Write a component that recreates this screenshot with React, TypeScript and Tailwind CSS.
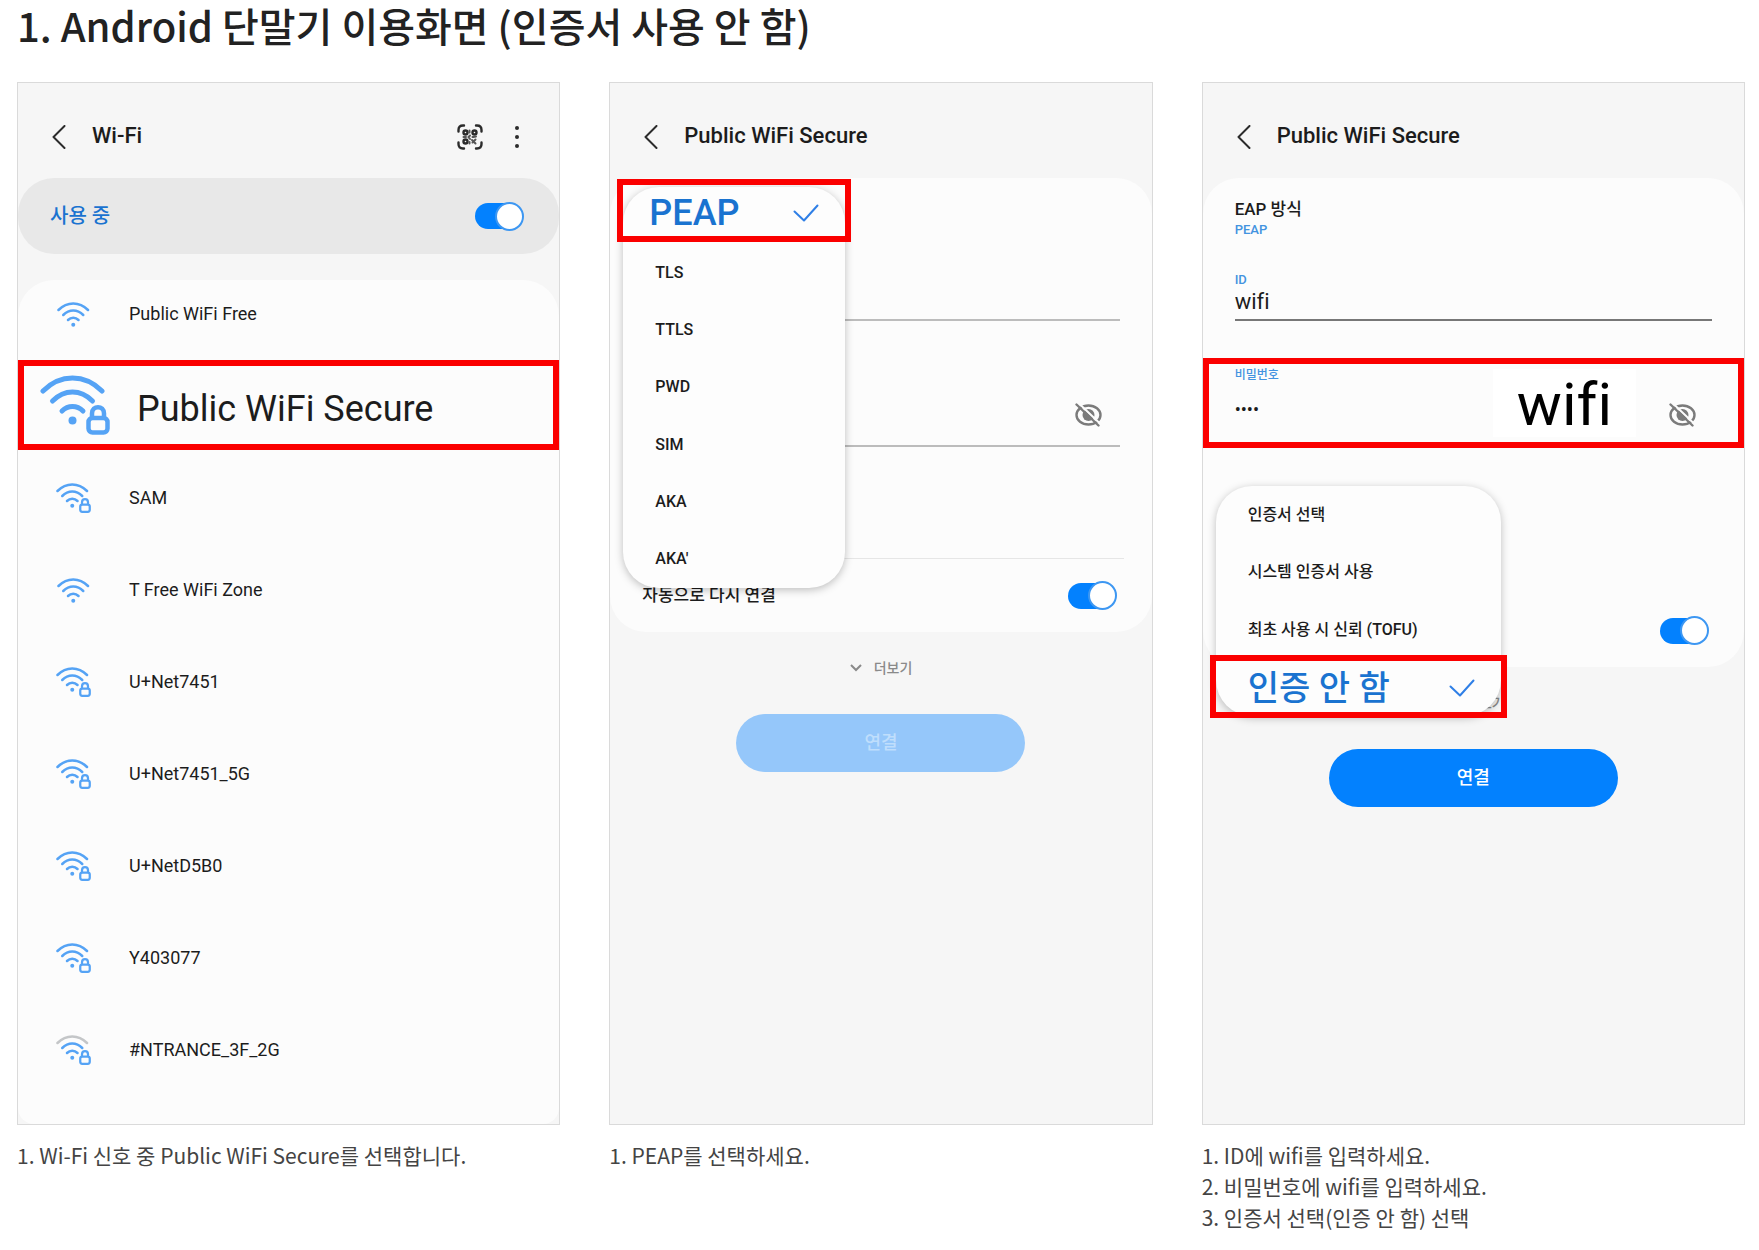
import React from "react";
import clsx from "clsx";

type Network = {
  name: string;
  locked?: boolean;
  weak?: boolean;
  highlighted?: boolean;
};

const networks: Network[] = [
  { name: "Public WiFi Free" },
  { name: "Public WiFi Secure", locked: true, highlighted: true },
  { name: "SAM", locked: true },
  { name: "T Free WiFi Zone" },
  { name: "U+Net7451", locked: true },
  { name: "U+Net7451_5G", locked: true },
  { name: "U+NetD5B0", locked: true },
  { name: "Y403077", locked: true },
  { name: "#NTRANCE_3F_2G", locked: true, weak: true },
];

const eapMethods = ["TLS", "TTLS", "PWD", "SIM", "AKA", "AKA'"];

const certificates = [
  "인증서 선택",
  "시스템 인증서 사용",
  "최초 사용 시 신뢰 (TOFU)",
];

const WifiIcon = ({
  locked,
  weak,
  className,
}: {
  locked?: boolean;
  weak?: boolean;
  className?: string;
}) => (
  <svg
    viewBox={locked ? "0 0 70 60" : "0 0 66 50"}
    className={className}
    fill="none"
    stroke="#55a3f5"
    strokeWidth="5"
    strokeLinecap="round"
    aria-hidden="true"
  >
    <path
      d="M3 16C11 8 20 3 32.5 3S54 8 62 16"
      stroke={weak ? "#c4c6c8" : undefined}
    />
    <path d="M12.5 26C18 20.5 24 17 32.5 17S47 20.5 52.5 26" />
    <path d="M22 36C25 33 28 31.500 32.500 31.500S40 33 43 36" />
    <circle cx="32.500" cy="45.500" r="4" fill="#55a3f5" stroke="none" />
    {locked && (
      <>
        <rect x="48.500" y="43" width="19" height="14.500" rx="4" strokeWidth="4.500" />
        <path d="M52 42V38.500C52 30 64 30 64 38.500V42" strokeWidth="4.500" />
      </>
    )}
  </svg>
);

const BackIcon = () => (
  <svg
    viewBox="0 0 14 24"
    className="h-6 w-3.5"
    fill="none"
    stroke="#2b2b2b"
    strokeWidth="2"
    strokeLinecap="round"
    strokeLinejoin="round"
    aria-hidden="true"
  >
    <path d="M12.500 1 1.500 12 12.500 23" />
  </svg>
);

const QrIcon = () => (
  <svg
    viewBox="0 0 26 26"
    className="size-6.5"
    fill="none"
    stroke="#2b2b2b"
    strokeWidth="2.400"
    strokeLinecap="round"
    aria-hidden="true"
  >
    <path d="M1.500 7.500V6C1.500 3 3 1.500 6 1.500h1M19 1.500h1c3 0 4.500 1.500 4.500 4.500v1.500M24.500 18.500V20c0 3-1.500 4.500-4.500 4.500h-1M7 24.500H6c-3 0-4.500-1.500-4.500-4.500v-1.500" />
    <circle cx="8.500" cy="8.500" r="2" />
    <circle cx="17.500" cy="8.500" r="2" />
    <circle cx="8.500" cy="17.500" r="2" />
    <path
      d="M12.500 6.500v2M13 11.500l-1.500 1.500 1.500 2M6.500 13h2.500M15.500 13h1l2.500-.5M12.500 18v1.500M15 16l3.500 3.500M18.500 15.500l-3 3"
      strokeWidth="2"
      stroke="#555"
    />
  </svg>
);

const MoreIcon = () => (
  <svg viewBox="0 0 4 24" className="h-6 w-1" fill="#2b2b2b" aria-hidden="true">
    <circle cx="2" cy="3" r="2" />
    <circle cx="2" cy="12" r="2" />
    <circle cx="2" cy="21" r="2" />
  </svg>
);

const EyeOffIcon = () => (
  <svg
    viewBox="0 0 28 24"
    className="h-6 w-7"
    fill="none"
    stroke="#7b7b7b"
    strokeWidth="2.400"
    strokeLinecap="round"
    aria-hidden="true"
  >
    <ellipse cx="14.500" cy="12" rx="12" ry="9.500" />
    <circle cx="14.500" cy="12" r="6" fill="#7b7b7b" stroke="none" />
    <path d="M5 .5 27 21.500" stroke="#fcfcfc" strokeWidth="2" />
    <path d="M2.500 1.500 24.500 22.500" />
  </svg>
);

const CheckIcon = () => (
  <svg
    viewBox="0 0 26 18"
    className="h-4.5 w-6.5"
    fill="none"
    stroke="#2f7fe6"
    strokeWidth="2"
    strokeLinecap="round"
    strokeLinejoin="round"
    aria-hidden="true"
  >
    <path d="M1.500 7.500 11 16.500 24.500 1.500" />
  </svg>
);

const Toggle = ({ label }: { label: string }) => (
  <label className="relative flex h-[30px] w-[49px] shrink-0 cursor-pointer items-center">
    <input
      type="checkbox"
      defaultChecked
      aria-label={label}
      className="peer sr-only"
    />
    <span className="h-[26px] w-[46px] rounded-full bg-gray-400 peer-checked:bg-[#0381fe]" />
    <span className="absolute left-0 size-[29px] rounded-full border-2 border-gray-400 bg-white peer-checked:right-0 peer-checked:left-auto peer-checked:border-[#3d97f2]" />
  </label>
);

const Phone = ({
  title,
  actions,
  children,
}: {
  title: string;
  actions?: React.ReactNode;
  children: React.ReactNode;
}) => (
  <div className="flex min-h-[1043px] flex-col overflow-hidden border border-[#dadada] bg-[#f6f6f6] font-['Roboto','Noto_Sans_CJK_KR',sans-serif] text-lg text-[#1c1c1c] [font-variant-ligatures:none]">
    <header className="flex h-[95px] items-center pt-3 pr-10 pl-[34px]">
      <button type="button" aria-label="뒤로">
        <BackIcon />
      </button>
      <h2 className="ml-[26px] text-[22px] font-medium">{title}</h2>
      {actions && (
        <div className="ml-auto flex items-center gap-8">{actions}</div>
      )}
    </header>
    {children}
  </div>
);

const Steps = ({ items }: { items: string[] }) => (
  <ol className="mt-[15px] text-[21px] leading-[31px] text-[#444]">
    {items.map((item, i) => (
      <li key={item}>
        {i + 1}. {item}
      </li>
    ))}
  </ol>
);

const Footer = ({ disabled }: { disabled?: boolean }) => (
  <>
    <button
      type="button"
      className="flex h-[72px] items-center justify-center gap-3 text-sm font-medium text-[#8a8a8a]"
    >
      <svg
        viewBox="0 0 12 8"
        className="h-2 w-3"
        fill="none"
        stroke="#8a8a8a"
        strokeWidth="2"
        aria-hidden="true"
      >
        <path d="m1 1 5 5 5-5" />
      </svg>
      더보기
    </button>
    <button
      type="button"
      disabled={disabled}
      className="mt-[10px] h-[58px] w-[289px] self-center rounded-full bg-[#0381fe] font-medium text-white disabled:bg-[#95c7fa] disabled:text-[#bfdefc]"
    >
      연결
    </button>
  </>
);

const NetworkRow = ({ name, locked, weak, highlighted }: Network) => (
  <li className={clsx(highlighted && "-mt-3 -mb-2.5")}>
    <button
      type="button"
      className={clsx(
        "flex w-full items-center text-left",
        highlighted
          ? "h-[90px] gap-[27px] border-6 border-[#fb0000] px-4 text-4xl"
          : "h-[68px] gap-[38px] px-[38px]",
      )}
    >
      {highlighted ? (
        <WifiIcon locked className="h-[60px] w-[70px]" />
      ) : (
        <span className="flex w-[35px] justify-center">
          <WifiIcon
            locked={locked}
            weak={weak}
            className={locked ? "h-[30px] w-[35px]" : "h-[25px] w-[33px]"}
          />
        </span>
      )}
      <span className={clsx(highlighted && "pt-2")}>{name}</span>
    </button>
  </li>
);

const WifiListScreen = () => (
  <Phone
    title="Wi-Fi"
    actions={
      <>
        <button type="button" aria-label="QR 코드 스캔">
          <QrIcon />
        </button>
        <button type="button" aria-label="더보기">
          <MoreIcon />
        </button>
      </>
    }
  >
    <div className="flex h-[76px] items-center justify-between rounded-[36px] bg-[#e8e8e8] pr-[35px] pl-8">
      <span className="text-xl font-medium text-[#1a73d0]">사용 중</span>
      <Toggle label="Wi-Fi 사용" />
    </div>
    <ul className="mt-[26px] flex flex-1 flex-col gap-6 rounded-t-[36px] rounded-b-2xl bg-[#fcfcfc]">
      {networks.map((network) => (
        <NetworkRow key={network.name} {...network} />
      ))}
    </ul>
  </Phone>
);

const EapScreen = () => (
  <Phone title="Public WiFi Secure">
    <div className="relative rounded-[36px] bg-[#fcfcfc]">
      <div className="mx-8 h-[143px] border-b-2 border-[#bcbcbc]" />
      <div className="mx-8 flex h-[126px] items-end justify-end border-b-2 border-[#bcbcbc] pr-[18px] pb-[18px]">
        <button type="button" aria-label="비밀번호 표시">
          <EyeOffIcon />
        </button>
      </div>
      <div className="mx-7 h-[112px] border-b border-[#e6e6e6]" />
      <div className="flex h-[73px] items-center justify-between pr-[35px] pl-8">
        <span className="text-[17px] font-medium">자동으로 다시 연결</span>
        <Toggle label="자동으로 다시 연결" />
      </div>

      <ul
        role="listbox"
        aria-label="EAP 방식"
        className="absolute top-[9px] left-[13px] grid h-[401px] w-[222px] auto-rows-fr rounded-[36px] bg-[#fdfdfd] text-base font-medium shadow-[0_2px_8px_rgba(0,0,0,0.25)]"
      >
        <li role="option" aria-selected="true" className="relative">
          <button
            type="button"
            className="absolute -inset-x-1.5 -top-2 flex h-[63px] items-center justify-between border-6 border-[#fb0000] pt-1 pr-[26px] pl-[26px] text-4xl font-medium text-[#1a73d0]"
          >
            PEAP
            <CheckIcon />
          </button>
        </li>
        {eapMethods.map((method) => (
          <li key={method} role="option" aria-selected="false" className="flex">
            <button type="button" className="flex-1 px-8 text-left">
              {method}
            </button>
          </li>
        ))}
      </ul>
    </div>
    <Footer disabled />
  </Phone>
);

const CredentialsScreen = () => (
  <Phone title="Public WiFi Secure">
    <div className="relative z-10 rounded-[36px] bg-[#fcfcfc] pt-5">
      <div className="px-8">
        <p className="text-[17px] leading-[22px] font-medium">EAP 방식</p>
        <p className="text-[13px] leading-5 font-medium text-[#4393e0]">PEAP</p>
        <label
          htmlFor="wifi-id"
          className="mt-[30px] block text-[13px] leading-5 font-medium text-[#4393e0]"
        >
          ID
        </label>
        <input
          id="wifi-id"
          type="text"
          defaultValue="wifi"
          className="block h-[31px] w-full border-b-2 border-[#777] pb-1 text-[22px] outline-none"
        />
      </div>
      <div className="mt-[37px] flex h-[90px] items-center border-6 border-[#fb0000] pr-[42px] pl-[26px]">
        <div className="min-w-0 flex-1 self-start">
          <label
            htmlFor="wifi-password"
            className="block text-xs leading-[22px] font-medium text-[#4393e0]"
          >
            비밀번호
          </label>
          <input
            id="wifi-password"
            type="password"
            defaultValue="wifi"
            className="mt-3 block h-6 w-full text-lg outline-none"
          />
        </div>
        <span className="bg-white px-6 pt-1 text-[60px] leading-[64px] text-black">
          wifi
        </span>
        <button type="button" aria-label="비밀번호 표시" className="mt-6 ml-8">
          <EyeOffIcon />
        </button>
      </div>
      <div className="mt-[146px] flex h-[73px] items-center justify-end pr-[35px]">
        <Toggle label="자동으로 다시 연결" />
      </div>

      <ul
        role="listbox"
        aria-label="CA 인증서"
        className="absolute top-[308px] left-[13px] grid h-[230px] w-[285px] auto-rows-fr rounded-[36px] bg-[#fdfdfd] text-base font-medium shadow-[0_2px_8px_rgba(0,0,0,0.25)]"
      >
        {certificates.map((certificate) => (
          <li
            key={certificate}
            role="option"
            aria-selected="false"
            className="flex"
          >
            <button type="button" className="flex-1 px-8 text-left">
              {certificate}
            </button>
          </li>
        ))}
        <li role="option" aria-selected="true" className="relative">
          <button
            type="button"
            className="absolute -inset-x-1.5 -top-1 flex h-[63px] items-center justify-between border-6 border-[#fb0000] pt-1 pr-[26px] pl-8 text-[34px] font-medium text-[#1a73d0]"
          >
            인증 안 함
            <CheckIcon />
          </button>
        </li>
      </ul>
    </div>
    <Footer />
  </Phone>
);

const App = () => {
  return (
    <main className="bg-white pr-3.5 pb-4 pl-[17px] font-['Noto_Sans_CJK_KR',sans-serif]">
      <h1 className="text-[40px] leading-[50px] font-medium text-[#222]">
        1. Android 단말기 이용화면 (인증서 사용 안 함)
      </h1>
      <div className="mt-8 grid gap-x-[49px] gap-y-8 lg:grid-cols-3">
        <section>
          <WifiListScreen />
          <Steps items={["Wi-Fi 신호 중 Public WiFi Secure를 선택합니다."]} />
        </section>
        <section>
          <EapScreen />
          <Steps items={["PEAP를 선택하세요."]} />
        </section>
        <section>
          <CredentialsScreen />
          <Steps
            items={[
              "ID에 wifi를 입력하세요.",
              "비밀번호에 wifi를 입력하세요.",
              "인증서 선택(인증 안 함) 선택",
            ]}
          />
        </section>
      </div>
    </main>
  );
};

export default App;
